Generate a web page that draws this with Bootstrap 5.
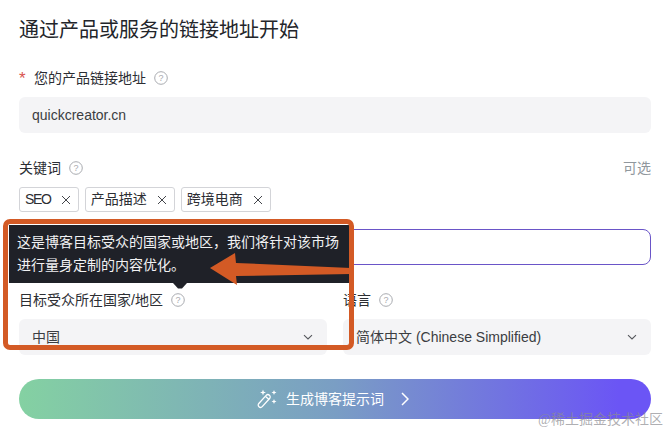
<!DOCTYPE html>
<html lang="zh-CN"><head><meta charset="utf-8">
<link href="https://cdn.jsdelivr.net/npm/bootstrap@5.3.0/dist/css/bootstrap.min.css" rel="stylesheet">
<style>
html,body{height:433px;overflow:hidden}
body{background:#fff;width:668px;position:relative;font-family:"Liberation Sans","Noto Sans CJK SC",sans-serif;color:#26282d;font-size:14px}
.pane{padding:18px 17px 0 19px}
.ttl{font-size:20px;line-height:25px;font-weight:400;margin:0 0 25px;color:#23252a}
.lbl{font-size:14px;line-height:20px;height:20px;color:#2c2e33;margin-bottom:9px}
.req{color:#d9534f;width:15px;font-size:17px;line-height:20px;padding-top:2px}
.qm{width:14px;height:14px;margin-left:8px;flex:none}
.fld{height:36px;background:#f4f4f6;border-radius:6px;padding:0 13px;line-height:36px;color:#3b3d42}
.gapkw{margin-bottom:25px}
.tagrow{gap:6px;margin-bottom:17px}
.tag{height:25px;border:1px solid #d3d4d8;border-radius:3px;padding:0 7px 0 5px;line-height:23px;color:#2c2e33;gap:10px}
.seo{letter-spacing:-1.3px}
.x{width:10px;height:10px;flex:none}
.focusbox{height:36px;border:1px solid #6a55c8;border-radius:8px;background:#fff;margin-bottom:25px}
.cols{gap:16px;margin-bottom:24px}
.half{width:50%}
.chev{width:12px;height:12px;flex:none}
.gobtn{height:40px;border:0;border-radius:20px;width:100%;background:linear-gradient(90deg,#84d1a2 0%,#7a9ec4 50%,#6b55f5 95%);color:#fff;font-size:14px;gap:9px;padding:0 4px 0 0}
.gobtn:hover{color:#fff}
.tip{position:absolute;left:9px;top:225px;width:340px;height:58px;background:#1f2128;color:#f1f1f3;font-size:14px;line-height:23px;padding:6px 8px}
.tipnub{position:absolute;left:173px;top:283px;width:14px;height:6px;overflow:hidden}
.frame{position:absolute;left:3px;top:219px;width:351px;height:131px;border:5px solid #d35a25;border-radius:7px;pointer-events:none}
.arrow{position:absolute;left:205px;top:250px;width:146px;height:36px}
.wm{position:absolute;right:5px;top:410px;font-family:"Liberation Serif","Noto Sans CJK SC",serif;font-size:14px;line-height:20px;color:rgba(140,140,145,.7)}
</style></head><body>
<main class="pane">
<h1 class="ttl">通过产品或服务的链接地址开始</h1>
<div class="lbl d-flex align-items-center"><span class="req">*</span><span>您的产品链接地址</span><svg class="qm" viewBox="0 0 14 14"><circle cx="7" cy="7" r="6.3" fill="none" stroke="#a9abb0"/><text x="7" y="10.2" text-anchor="middle" font-size="9" fill="#a9abb0" font-family="Liberation Sans">?</text></svg></div>
<div class="fld gapkw">quickcreator.cn</div>
<div class="lbl d-flex align-items-center justify-content-between"><span class="d-flex align-items-center">关键词<svg class="qm" viewBox="0 0 14 14"><circle cx="7" cy="7" r="6.3" fill="none" stroke="#a9abb0"/><text x="7" y="10.2" text-anchor="middle" font-size="9" fill="#a9abb0" font-family="Liberation Sans">?</text></svg></span><span class="text-secondary opacity-75">可选</span></div>
<div class="d-flex tagrow">
<span class="tag d-inline-flex align-items-center"><span class="seo">SEO</span><svg class="x" viewBox="0 0 10 10"><path d="M1 1l8 8M9 1l-8 8" stroke="#44464b" fill="none"/></svg></span>
<span class="tag d-inline-flex align-items-center">产品描述<svg class="x" viewBox="0 0 10 10"><path d="M1 1l8 8M9 1l-8 8" stroke="#44464b" fill="none"/></svg></span>
<span class="tag d-inline-flex align-items-center">跨境电商<svg class="x" viewBox="0 0 10 10"><path d="M1 1l8 8M9 1l-8 8" stroke="#44464b" fill="none"/></svg></span>
</div>
<div class="focusbox"></div>
<div class="d-flex cols">
<div class="flex-fill half">
<div class="lbl d-flex align-items-center">目标受众所在国家/地区<svg class="qm" viewBox="0 0 14 14"><circle cx="7" cy="7" r="6.3" fill="none" stroke="#a9abb0"/><text x="7" y="10.2" text-anchor="middle" font-size="9" fill="#a9abb0" font-family="Liberation Sans">?</text></svg></div>
<div class="fld d-flex align-items-center justify-content-between"><span>中国</span><svg class="chev" viewBox="0 0 12 12"><path d="M2 4.2l4 3.8 4-3.8" stroke="#55575c" fill="none" stroke-width="1.1"/></svg></div>
</div>
<div class="flex-fill half">
<div class="lbl d-flex align-items-center">语言<svg class="qm" viewBox="0 0 14 14"><circle cx="7" cy="7" r="6.3" fill="none" stroke="#a9abb0"/><text x="7" y="10.2" text-anchor="middle" font-size="9" fill="#a9abb0" font-family="Liberation Sans">?</text></svg></div>
<div class="fld d-flex align-items-center justify-content-between"><span>简体中文 (Chinese Simplified)</span><svg class="chev" viewBox="0 0 12 12"><path d="M2 4.2l4 3.8 4-3.8" stroke="#55575c" fill="none" stroke-width="1.1"/></svg></div>
</div>
</div>
<button class="gobtn btn d-flex align-items-center justify-content-center"><svg width="20" height="20" viewBox="0 0 20 20" fill="none"><rect x="-2.3" y="-7.8" width="4.6" height="15.600" rx="2.3" transform="translate(7.2 12) rotate(42)" stroke="#fff" stroke-width="1.3"/><path d="M8.6 7.6l3.4 3" stroke="#fff" stroke-width="1.3"/><path d="M6 .5l.8 2.2 2.2.8-2.2.8L6 6.500l-.8-2.200L3 3.500l2.200-.8zM17 1l.7 1.800 1.800.7-1.800.7L17 6l-.7-1.800-1.800-.7 1.800-.7zM17 10l.7 1.800 1.800.7-1.800.7L17 15l-.7-1.800-1.800-.7 1.800-.7z" fill="#fff"/></svg><span>生成博客提示词</span><svg width="8" height="14" viewBox="0 0 8 14" class="ms-2"><path d="M1 1l6 6-6 6" stroke="#fff" stroke-width="1.5" fill="none"/></svg></button>
</main>
<div class="tip">这是博客目标受众的国家或地区，我们将针对该市场进行量身定制的内容优化。</div>
<svg class="tipnub" viewBox="0 0 14 6"><path d="M0 0h14l-5 5.500h-4z" fill="#1f2128"/></svg>
<svg class="arrow" viewBox="0 0 146 36"><path d="M5 18L30 3l1 10 115 5v6L31 26l1 9z" fill="#d35a25"/></svg>
<div class="frame"></div>
<div class="wm">@稀土掘金技术社区</div>
</body></html>
